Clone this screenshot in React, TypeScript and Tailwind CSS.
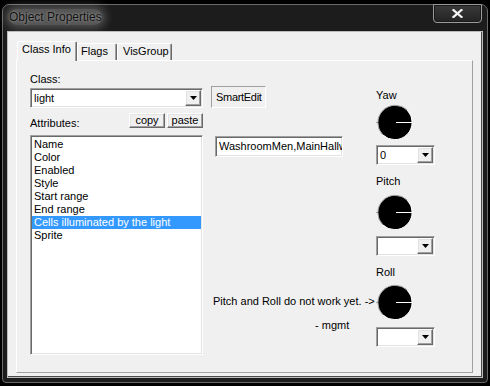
import React from "react";

const sunken =
  "border border-t-[#a0a0a0] border-l-[#a0a0a0] border-r-white border-b-white shadow-[inset_1px_1px_0_#696969,inset_-1px_-1px_0_#e3e3e3]";
const raised =
  "border border-t-white border-l-white border-r-[#696969] border-b-[#696969] shadow-[inset_-1px_-1px_0_#a0a0a0,inset_1px_1px_0_#e3e3e3] bg-[#f0f0f0]";

function Arrow() {
  return (
    <svg width="7" height="4" viewBox="0 0 7 4">
      <polygon points="0,0 7,0 3.5,4" fill="#000" />
    </svg>
  );
}

function Combo({ value, className }: { value: string; className: string }) {
  return (
    <div className={`${sunken} bg-white flex p-[1px] ${className}`}>
      <div className="flex-1 pl-[2px] leading-[16px] overflow-hidden whitespace-nowrap">{value}</div>
      <div className={`${raised} w-[16px] h-[16px] flex items-center justify-center`}>
        <Arrow />
      </div>
    </div>
  );
}

function Knob() {
  return (
    <svg width="38" height="38" viewBox="0 0 38 38" className="block">
      <circle cx="19" cy="18.5" r="17" fill="#000" />
      <path d="M 6.63 30.87 A 17.5 17.5 0 0 1 31.37 6.13" stroke="#a0a0a0" strokeWidth="1" fill="none" />
      <path d="M 31.37 6.13 A 17.5 17.5 0 0 1 6.63 30.87" stroke="#ffffff" strokeWidth="1" fill="none" />
      <rect x="0" y="18" width="2" height="1" fill="#a0a0a0" />
      <rect x="20" y="18" width="16" height="1" fill="#ffffff" />
    </svg>
  );
}

const items = [
  "Name",
  "Color",
  "Enabled",
  "Style",
  "Start range",
  "End range",
  "Cells illuminated by the light",
  "Sprite",
];

export default function App() {
  return (
    <div className="w-[490px] h-[386px] bg-black overflow-hidden pt-[4px] pl-[2px] font-['Liberation_Sans',Arial,sans-serif] text-[11px] text-black">
      {/* window */}
      <div className="w-[486px] h-[379px] rounded-t-[7px] rounded-b-[4px] border border-[#6a6a6a] bg-[#1c1c1c] flex flex-col px-[4px] pb-[4px]">
        {/* title bar */}
        <div className="h-[26px] flex items-start justify-between">
          <div className="pt-[4px] pl-[2px]">
            <span className="block rounded-[9px] bg-[rgba(255,255,255,0.26)] shadow-[0_0_8px_4px_rgba(255,255,255,0.22)] text-[12px] leading-[16px] text-[#111] [text-shadow:0_0_3px_rgba(255,255,255,0.5)]">
              Object Properties
            </span>
          </div>
          <div className="-mt-[1px] mr-[1px] w-[49px] h-[19px] rounded-b-[4px] border border-[#9a9a9a] bg-[linear-gradient(#3a3a3a,#232323)] shadow-[inset_0_0_0_1px_#1a1a1a] flex items-center justify-center">
            <svg width="11" height="9" viewBox="0 0 11 9">
              <path d="M1.5 1 L9.5 8 M9.5 1 L1.5 8" stroke="#f4f4f4" strokeWidth="2.2" strokeLinecap="square" />
            </svg>
          </div>
        </div>
        {/* client area */}
        <div className="flex-1 border border-[#bcbcbc]">
          <div className="w-full h-full bg-[#f0f0f0] border-r border-b border-[#4a4a4a] pl-[8px] pt-[9px]">
            {/* tabs */}
            <div className="h-[20px] flex items-end pl-[1px] -mb-[1px] relative z-10">
              <div className="w-[60px] h-[20px] bg-[#f0f0f0] border-t border-l border-white border-r border-r-[#696969] rounded-t-[2px] shadow-[inset_-1px_0_0_#a0a0a0] pl-[4px] pt-[1px] leading-[13px] whitespace-nowrap">
                Class Info
              </div>
              <div className="w-[40px] h-[17px] mb-[1px] bg-[#f0f0f0] border-t border-l border-white border-r border-r-[#696969] rounded-t-[2px] shadow-[inset_-1px_0_0_#a0a0a0] pl-[3px] pt-[1px] leading-[13px] whitespace-nowrap">
                Flags
              </div>
              <div className="w-[55px] h-[17px] mb-[1px] bg-[#f0f0f0] border-t border-l border-white border-r border-r-[#696969] rounded-t-[2px] shadow-[inset_-1px_0_0_#a0a0a0] pl-[5px] pt-[1px] leading-[13px] whitespace-nowrap">
                VisGroup
              </div>
            </div>
            {/* panel */}
            <div className="w-[457px] h-[313px] border border-t-white border-l-white border-r-[#a0a0a0] border-b-[#a0a0a0] flex items-start pl-[13px] pt-[12px] leading-[13px]">
              {/* left column */}
              <div className="w-[173px] flex flex-col">
                <div className="h-[13px]">Class:</div>
                <Combo value="light" className="mt-[2px] h-[20px] w-[173px]" />
                <div className="mt-[5px] h-[22px] flex justify-between">
                  <div className="self-end mb-[5px]">Attributes:</div>
                  <div className="flex gap-[2px]">
                    <div className={`${raised} w-[36px] h-[15px] flex items-center justify-center leading-[13px]`}>copy</div>
                    <div className={`${raised} w-[36px] h-[15px] flex items-center justify-center leading-[13px]`}>paste</div>
                  </div>
                </div>
                <div className={`${sunken} bg-white h-[220px] p-[1px] pt-[2px]`}>
                  {items.map((it) => (
                    <div
                      key={it}
                      className={`h-[13px] pl-[2px] whitespace-nowrap ${
                        it.startsWith("Cells") ? "bg-[#3399ff] text-white" : ""
                      }`}
                    >
                      {it}
                    </div>
                  ))}
                </div>
              </div>
              {/* middle column */}
              <div className="w-[160px] ml-[8px] pt-[13px] flex flex-col">
                <div className="w-[55px] h-[22px] border border-t-[#a0a0a0] border-l-[#a0a0a0] border-r-white border-b-white bg-[#f0f0f0] flex items-center pl-[4px] whitespace-nowrap tracking-[-0.3px]">
                  SmartEdit
                </div>
                <div className={`${sunken} bg-white ml-[4px] mt-[28px] w-[128px] h-[21px] pl-[3px] leading-[19px] overflow-hidden whitespace-nowrap`}>
                  WashroomMen,MainHallw
                </div>
                <div className="mt-[138px] ml-[2px] whitespace-nowrap">Pitch and Roll do not work yet. -&gt;</div>
                <div className="mt-[11px] ml-[104px] whitespace-nowrap">- mgmt</div>
              </div>
              {/* right column */}
              <div className="ml-[5px] w-[59px] flex flex-col">
                <div className="mt-[16px] h-[13px]">Yaw</div>
                <div className="mt-[2px]">
                  <Knob />
                </div>
                <Combo value="0" className="mt-[3px] h-[20px] w-[59px]" />
                <div className="mt-[10px] h-[13px]">Pitch</div>
                <div className="mt-[6px]">
                  <Knob />
                </div>
                <Combo value="" className="mt-[4px] h-[20px] w-[59px]" />
                <div className="mt-[10px] h-[13px]">Roll</div>
                <div className="mt-[5px]">
                  <Knob />
                </div>
                <Combo value="" className="mt-[5px] h-[20px] w-[59px]" />
              </div>
            </div>
          </div>
        </div>
      </div>
    </div>
  );
}
